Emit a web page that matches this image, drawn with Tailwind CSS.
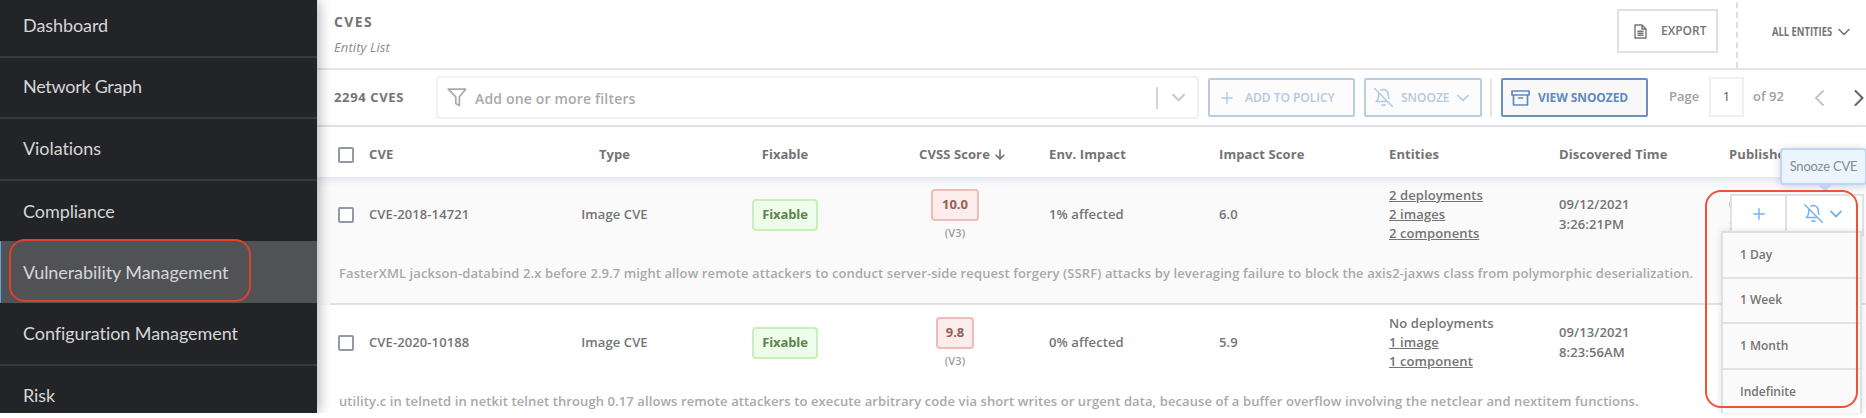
<!DOCTYPE html>
<html lang="en">
<head>
<meta charset="utf-8">
<title>CVEs</title>
<script src="https://cdn.jsdelivr.net/npm/@tailwindcss/browser@4"></script>
</head>
<body class="bg-white">
<svg class="hidden">
  <symbol id="bell-off" viewBox="0 0 24 24" fill="none" stroke="currentColor" stroke-width="2" stroke-linecap="round" stroke-linejoin="round"><path d="M13.73 21a2 2 0 0 1-3.46 0M18.63 13A17.89 17.89 0 0 1 18 8M6.26 6.26A5.86 5.86 0 0 0 6 8c0 7-3 9-3 9h14M18 8a6 6 0 0 0-9.33-5M1 1l22 22"/></symbol>
  <symbol id="plus" viewBox="0 0 12 12" fill="none" stroke="currentColor" stroke-linecap="round"><path d="M6 .8v10.4M.8 6h10.4"/></symbol>
  <symbol id="down" viewBox="0 0 12 8" fill="none" stroke="currentColor" stroke-linecap="round" stroke-linejoin="round"><path d="M1 1.5l5 5 5-5"/></symbol>
</svg>
<div class="relative flex h-[418px] w-[1866px] overflow-hidden bg-white font-['Open_Sans',sans-serif] text-[13px] tracking-[0.1px] text-[#747474]">

  <div class="flex h-[413px] w-[1866px] overflow-hidden">
  <nav class="relative z-10 flex h-[413px] w-[317px] shrink-0 flex-col bg-[#232428] font-[Lato,sans-serif] text-[18px] tracking-[-0.07px] text-[#d6d6d6] shadow-[2px_0_12px_rgba(0,0,0,0.3)]">
    <a class="flex h-[58px] shrink-0 items-center border-b-2 border-[#37383c] pl-[23px] pb-[5px]">Dashboard</a>
    <a class="flex h-[61px] shrink-0 items-center border-b-2 border-[#37383c] pl-[23px] pb-[2px] tracking-[-0.28px]">Network Graph</a>
    <a class="flex h-[62px] shrink-0 items-center border-b-2 border-[#37383c] pl-[23px] pb-[1px]">Violations</a>
    <a class="flex h-[60px] shrink-0 items-center pl-[23px]">Compliance</a>
    <a class="flex h-[62px] shrink-0 items-center border-l border-[#5ea3e0] bg-[#515256] pl-[22px]">Vulnerability Management</a>
    <a class="flex h-[63px] shrink-0 items-center border-b-2 border-[#37383c] pl-[23px]">Configuration Management</a>
    <a class="flex h-[47px] shrink-0 items-start pt-[16px] pl-[23px]">Risk</a>
  </nav>

  <main class="flex h-[413px] w-[1549px] flex-col overflow-hidden">
    <header class="flex h-[70px] shrink-0 border-b-2 border-[#e6e6e6] pl-[17px]">
      <div class="flex w-[1283px] shrink-0 flex-col pt-[12px]">
        <div class="text-[14px] leading-[20px] font-bold tracking-[1.4px]">CVES</div>
        <div class="mt-[6px] leading-[18px] text-[#8c8c8c] italic">Entity List</div>
      </div>
      <button class="mt-[9px] flex h-[44px] w-[101px] shrink-0 items-center border-2 border-[#e0e0e0] pl-[15px] text-[12px] font-semibold tracking-normal">
        <svg class="h-[15px] w-[13px]" viewBox="0 0 13 15" fill="none" stroke="#747474" stroke-width="1.4" stroke-linejoin="round"><path d="M1 1h7l4 4v9H1zM8 1v4h4M3.5 7.3h6M3.5 9.3h6M3.5 11.3h6"/></svg>
        <span class="pb-px pl-[14px]">EXPORT</span>
      </button>
      <div class="mt-[2px] ml-[18px] flex h-[66px] items-center border-l-2 border-dashed border-[#dedede] pl-[34px]">
        <span class="w-[66px] origin-left scale-x-[0.785] pb-[6px] text-[12px] leading-[14px] font-bold tracking-normal whitespace-nowrap">ALL ENTITIES</span>
        <svg class="mb-[7px] h-[8px] w-[12px] text-[#747474]" stroke-width="1.6"><use href="#down"/></svg>
      </div>
    </header>

    <section class="flex h-[57px] shrink-0 items-center border-b-2 border-[#e6e6e6] pl-[17px]">
      <div class="w-[102px] shrink-0 font-bold tracking-[0.63px]">2294 CVES</div>
      <div class="flex h-[43px] w-[763px] shrink-0 items-center rounded-[4px] border-2 border-[#f1f1f1] pl-[9px] text-[14px] font-semibold text-[#a9a9a9]">
        <svg class="mr-[8px] h-[19px] w-[20px]" viewBox="0 0 20 19" fill="none" stroke="currentColor" stroke-width="1.7" stroke-linejoin="round"><path d="M1.2 1.2h17.4l-6.2 7.600v8.600l-3.600-1.800v-6.800z"/></svg>
        <span class="w-[681px] pt-px tracking-[0.17px]">Add one or more filters</span>
        <span class="h-[22px] w-[2px] shrink-0 bg-[#d4d4d4]"></span>
        <svg class="ml-[14px] h-[9px] w-[13px] shrink-0 text-[#cacaca]" stroke-width="2"><use href="#down"/></svg>
      </div>
      <button class="ml-[9px] flex h-[39px] w-[147px] shrink-0 items-center rounded-[2px] border-2 border-[#b9cce4] bg-[#fcfcfc] pl-[11px] text-[12px] font-semibold tracking-normal text-[#b3c8e3]">
        <svg class="mr-[12px] h-[12px] w-[12px]" stroke-width="1.4"><use href="#plus"/></svg>ADD TO POLICY
      </button>
      <button class="ml-[9px] flex h-[39px] w-[118px] shrink-0 items-center rounded-[2px] border-2 border-[#b9cce4] bg-[#fcfcfc] pl-[8px] text-[12px] font-semibold tracking-normal text-[#b3c8e3]">
        <svg class="mr-[8px] h-[19px] w-[19px]"><use href="#bell-off"/></svg>SNOOZE
        <svg class="ml-[7px] h-[8px] w-[12px]" stroke-width="1.6"><use href="#down"/></svg>
      </button>
      <span class="mx-[8px] h-[38px] w-[2px] shrink-0 bg-[#e4e4e4]"></span>
      <button class="ml-px flex h-[39px] w-[147px] shrink-0 items-center rounded-[2px] border-2 border-[#6790c4] bg-[#f8f8f8] pl-[8px] text-[12px] font-bold tracking-[-0.1px] text-[#5f8ac0]">
        <svg class="mr-[8px] h-[16px] w-[19px]" viewBox="0 0 19 16" fill="none" stroke="currentColor" stroke-width="1.7" stroke-linejoin="round"><path d="M1 1h17v4H1zM2.500 5v10h14V5M7.500 8h4" stroke-linecap="round"/></svg>VIEW SNOOZED
      </button>
      <span class="ml-[21px] w-[40px] shrink-0 pb-[2px] font-semibold tracking-normal text-[#a0a0a0]">Page</span>
      <span class="mb-[2px] flex h-[40px] w-[35px] shrink-0 items-center justify-center border-2 border-[#f0f0f0] font-medium text-[#555]">1</span>
      <span class="ml-[9px] w-[62px] shrink-0 pb-[2px] font-semibold tracking-normal text-[#a0a0a0]">of 92</span>
      <svg class="h-[16px] w-[9px] shrink-0" viewBox="0 0 9 16" fill="none" stroke="#c4c4c4" stroke-width="1.9" stroke-linecap="round" stroke-linejoin="round"><path d="M8 1L1 8l7 7"/></svg>
      <svg class="ml-[30px] h-[16px] w-[10px] shrink-0" viewBox="0 0 9 16" fill="none" stroke="#666" stroke-width="2.1" stroke-linecap="round" stroke-linejoin="round"><path d="M1 1l7 7-7 7"/></svg>
    </section>

    <div class="relative z-[1] grid h-[50px] shrink-0 grid-cols-[52px_153px_185px_170px_178px_170px_170px_170px_170px_150px] items-center bg-white pt-[5px] font-bold shadow-[0_2px_8px_rgba(120,130,190,0.22)]">
      <span class="ml-[21px] h-[16px] w-[16px] rounded-[2px] border-2 border-[#9499a6]"></span>
      <span>CVE</span><span class="text-center">Type</span><span class="pr-[14px] text-center tracking-normal">Fixable</span>
      <span class="flex items-center pl-[42px] whitespace-nowrap">CVSS Score<svg class="ml-[5px] h-[11px] w-[10px]" viewBox="0 0 10 11" fill="none" stroke="currentColor" stroke-width="1.7" stroke-linecap="round" stroke-linejoin="round"><path d="M5 1v9M1.200 6.300L5 10l3.800-3.700"/></svg></span>
      <span class="-ml-[6px]">Env. Impact</span><span class="-ml-[6px]">Impact Score</span><span class="-ml-[6px]">Entities</span><span class="-ml-[6px]">Discovered Time</span><span class="-ml-[6px]">Published</span>
    </div>

    <div class="flex h-[128px] shrink-0 flex-col bg-[#fafafa]">
      <div class="grid h-[75px] grid-cols-[52px_153px_185px_170px_178px_170px_170px_170px_170px_150px] items-center font-semibold">
        <span class="ml-[21px] h-[16px] w-[16px] rounded-[2px] border-2 border-[#9499a6] bg-white"></span>
        <span>CVE-2018-14721</span><span class="text-center">Image CVE</span>
        <span class="flex justify-center pr-[14px]"><span class="flex h-[32px] w-[66px] items-center justify-center rounded-[4px] border-2 border-[#c8f0bf] bg-[#edfdea] font-bold tracking-[-0.1px] text-[#5c8450]">Fixable</span></span>
        <span class="flex flex-col items-center pr-[22px]"><span class="flex h-[32px] w-[48px] items-center justify-center rounded-[4px] border-2 border-[#efbcb9] bg-[#fcecea] font-bold tracking-normal text-[#93605c]">10.0</span><span class="mt-[4px] text-[11px] leading-[16px] text-[#9c9c9c]">(V3)</span></span>
        <span class="-ml-[6px]">1% affected</span><span class="-ml-[6px]">6.0</span>
        <span class="-ml-[6px] flex flex-col items-start leading-[19.1px]"><u>2 deployments</u><u>2 images</u><u>2 components</u></span>
        <span class="-ml-[6px] leading-[19.1px]">09/12/2021<br>3:26:21PM</span>
        <span class="-ml-[6px] leading-[19.1px]">0<br>:</span>
      </div>
      <div class="ml-[13px] flex flex-1 items-start border-b-2 border-[#e2e2e2] pt-[12px] pl-[9px] leading-[18px] font-semibold tracking-[0.107px] whitespace-nowrap text-[#a9a9a9]">FasterXML jackson-databind 2.x before 2.9.7 might allow remote attackers to conduct server-side request forgery (SSRF) attacks by leveraging failure to block the axis2-jaxws class from polymorphic deserialization.</div>
    </div>

    <div class="flex h-[108px] shrink-0 flex-col bg-white">
      <div class="grid h-[75px] grid-cols-[52px_153px_185px_170px_178px_170px_170px_170px_170px_150px] items-center font-semibold">
        <span class="ml-[21px] h-[16px] w-[16px] rounded-[2px] border-2 border-[#9499a6]"></span>
        <span>CVE-2020-10188</span><span class="text-center">Image CVE</span>
        <span class="flex justify-center pr-[14px]"><span class="flex h-[32px] w-[66px] items-center justify-center rounded-[4px] border-2 border-[#c8f0bf] bg-[#edfdea] font-bold tracking-[-0.1px] text-[#5c8450]">Fixable</span></span>
        <span class="flex flex-col items-center pr-[22px]"><span class="flex h-[32px] w-[38px] items-center justify-center rounded-[4px] border-2 border-[#efbcb9] bg-[#fcecea] font-bold tracking-normal text-[#93605c]">9.8</span><span class="mt-[4px] text-[11px] leading-[16px] text-[#9c9c9c]">(V3)</span></span>
        <span class="-ml-[6px]">0% affected</span><span class="-ml-[6px]">5.9</span>
        <span class="-ml-[6px] flex flex-col items-start leading-[19.1px]"><span>No deployments</span><u>1 image</u><u>1 component</u></span>
        <span class="-ml-[6px] leading-[19.1px]">09/13/2021<br>8:23:56AM</span>
      </div>
      <div class="ml-[13px] pt-[12px] pl-[9px] leading-[18px] font-semibold whitespace-nowrap text-[#a9a9a9]">utility.c in telnetd in netkit telnet through 0.17 allows remote attackers to execute arbitrary code via short writes or urgent data, because of a buffer overflow involving the netclear and nextitem functions.</div>
    </div>
  </main>
  </div>

  <!-- Row actions -->
  <div class="absolute top-[194px] left-[1730px] z-20 flex h-[42px] w-[134px] border-2 border-[#e2e2e2] bg-white text-[#76b5f5]">
    <span class="flex w-[55px] justify-center border-r-2 border-[#e2e2e2] pt-[12px]"><svg class="h-[12px] w-[12px]" stroke-width="1.5"><use href="#plus"/></svg></span>
    <span class="flex flex-1 pt-[8px] pl-[17px]"><svg class="h-[19px] w-[19px]"><use href="#bell-off"/></svg><svg class="mt-[6px] ml-[7px] h-[8px] w-[12px]" stroke-width="1.8"><use href="#down"/></svg></span>
  </div>
  <div class="absolute top-[231px] left-[1721px] z-20 flex h-[182px] w-[141px] flex-col overflow-hidden border-2 border-b-0 border-[#e0e0e0] bg-[#fafafa] text-[12px] font-semibold tracking-normal shadow-[0_0_6px_rgba(0,0,0,0.12)]">
    <span class="flex h-[45.5px] shrink-0 items-center border-b-2 border-[#e2e2e2] pl-[17px]">1 Day</span>
    <span class="flex h-[45.5px] shrink-0 items-center border-b-2 border-[#e2e2e2] pl-[17px]">1 Week</span>
    <span class="flex h-[45.5px] shrink-0 items-center border-b-2 border-[#e2e2e2] pl-[17px]">1 Month</span>
    <span class="flex h-[45.5px] shrink-0 items-center pl-[17px]">Indefinite</span>
  </div>

  <!-- Tooltip -->
  <div class="absolute top-[148px] left-[1780px] z-30 flex h-[37px] w-[87px] items-center justify-center rounded-[4px] border-2 border-[#bcd6f3] bg-[#ecf4fe] font-[Lato,sans-serif] tracking-[-0.2px] whitespace-nowrap text-[#868b92] shadow-[0_1px_8px_rgba(0,0,0,0.16)]">Snooze CVE
    <svg class="absolute top-[34px] left-[35px] h-[7px] w-[16px]" viewBox="0 0 16 7"><path d="M0 0h16L8 7z" fill="#bcd6f3"/></svg>
  </div>

  <!-- Callout outlines -->
  <div class="absolute top-[239px] left-[9px] z-20 h-[63px] w-[242px] rounded-[16px] border-2 border-[#dc4327]"></div>
  <div class="absolute top-[190px] left-[1705px] z-40 h-[218px] w-[153px] rounded-[16px] border-2 border-[#ee5238]"></div>
</div>
</body>
</html>
